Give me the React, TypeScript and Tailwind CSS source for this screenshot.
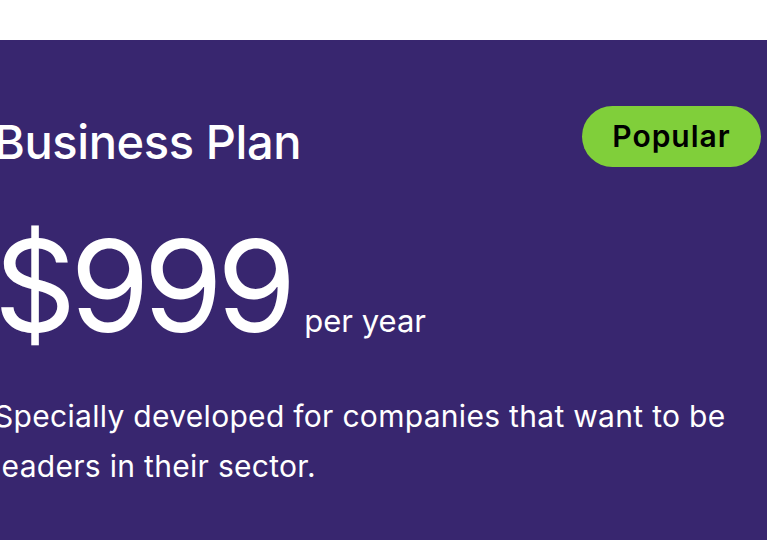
export default function App() {
  return (
    <div className="min-h-[540px] bg-white pt-[40px] font-['Inter',sans-serif]">
      <section className="min-h-[500px] bg-[#38266f] pt-[66px] pb-10 text-white">
        <div className="ml-[-6px] mr-[6px]">
          {/* Header row */}
          <div className="flex items-start justify-between">
            <h2 className="mt-[8px] text-[47px] font-medium leading-[56px] tracking-[-0.4px]">
              Business Plan
            </h2>
            <span className="flex h-[61px] w-[179px] items-center justify-center rounded-full bg-[#80cf3a] text-[30px] font-semibold tracking-[1px] text-black">
              Popular
            </span>
          </div>

          {/* Price */}
          <div className="mt-[52px] flex items-baseline">
            <span className="text-[128px] leading-none tracking-[-6px]">
              $999
            </span>
            <span className="ml-[14px] text-[31px] leading-none">
              per year
            </span>
          </div>

          {/* Description */}
          <p className="mt-[41px] max-w-[750px] text-[30px] leading-[50px] tracking-[0.3px]">
            Specially developed for companies that want to be leaders in their
            sector.
          </p>
        </div>
      </section>
    </div>
  );
}
